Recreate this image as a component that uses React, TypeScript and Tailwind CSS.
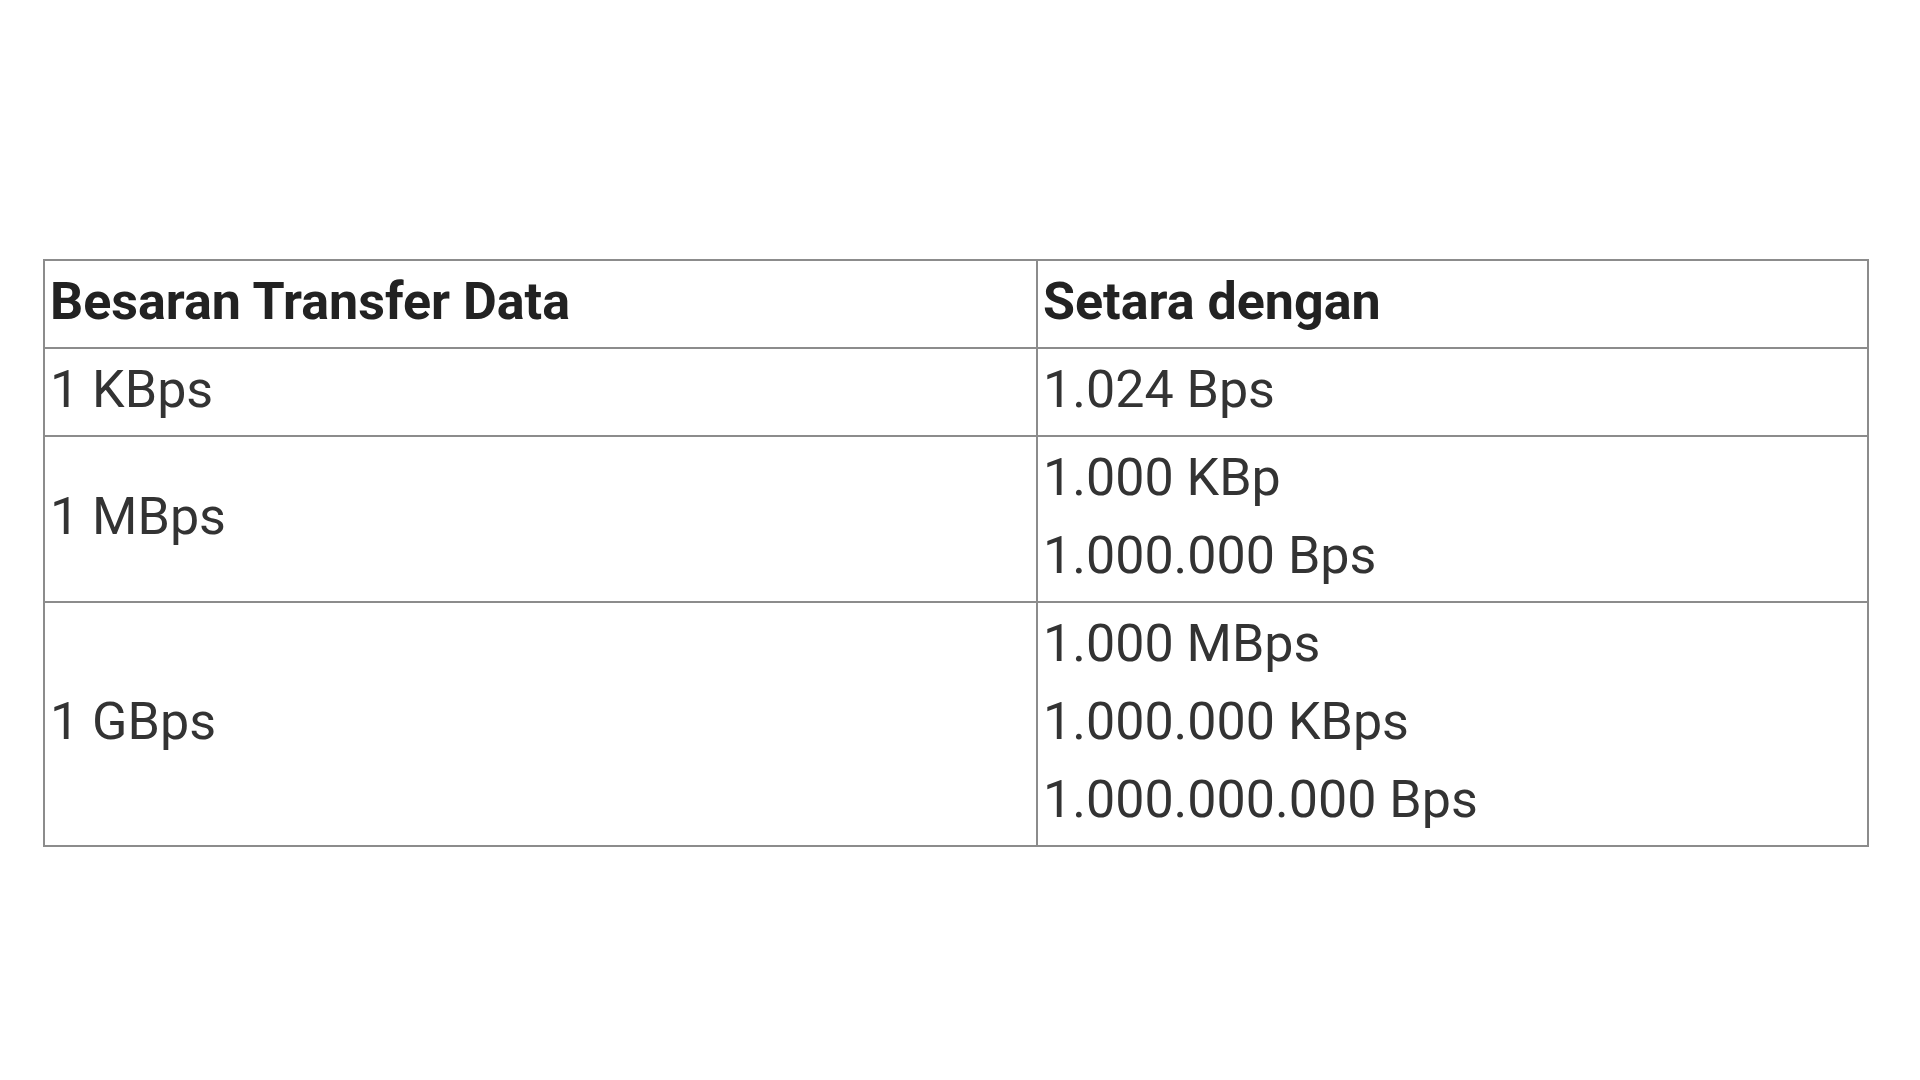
const rows: { size: string; equals: string[] }[] = [
  { size: "1 KBps", equals: ["1.024 Bps"] },
  { size: "1 MBps", equals: ["1.000 KBp", "1.000.000 Bps"] },
  { size: "1 GBps", equals: ["1.000 MBps", "1.000.000 KBps", "1.000.000.000 Bps"] },
];

export default function App() {
  return (
    <div className="min-h-screen w-full bg-white pl-[43px] pt-[259px] font-['Roboto',sans-serif] text-[52px] text-[#333]">
      <table className="w-[1826px] border-collapse border-2 border-[#8c8c8c]">
        <thead>
          <tr>
            <th className="w-[993px] border-2 border-[#8c8c8c] pl-[5px] pr-1 pt-0.5 pb-1.5 text-left align-middle font-bold leading-[78px] text-[#222]">
              Besaran Transfer Data
            </th>
            <th className="border-2 border-[#8c8c8c] pl-[5px] pr-1 pt-0.5 pb-1.5 text-left align-middle font-bold leading-[78px] text-[#222]">
              Setara dengan
            </th>
          </tr>
        </thead>
        <tbody>
          {rows.map((row) => (
            <tr key={row.size}>
              <td className="border-2 border-[#8c8c8c] pl-[5px] pr-1 pt-0.5 pb-1.5 align-middle leading-[78px]">{row.size}</td>
              <td className="border-2 border-[#8c8c8c] pl-[5px] pr-1 pt-0.5 pb-1.5 align-middle leading-[78px]">
                {row.equals.map((line) => (
                  <div key={line}>{line}</div>
                ))}
              </td>
            </tr>
          ))}
        </tbody>
      </table>
    </div>
  );
}
